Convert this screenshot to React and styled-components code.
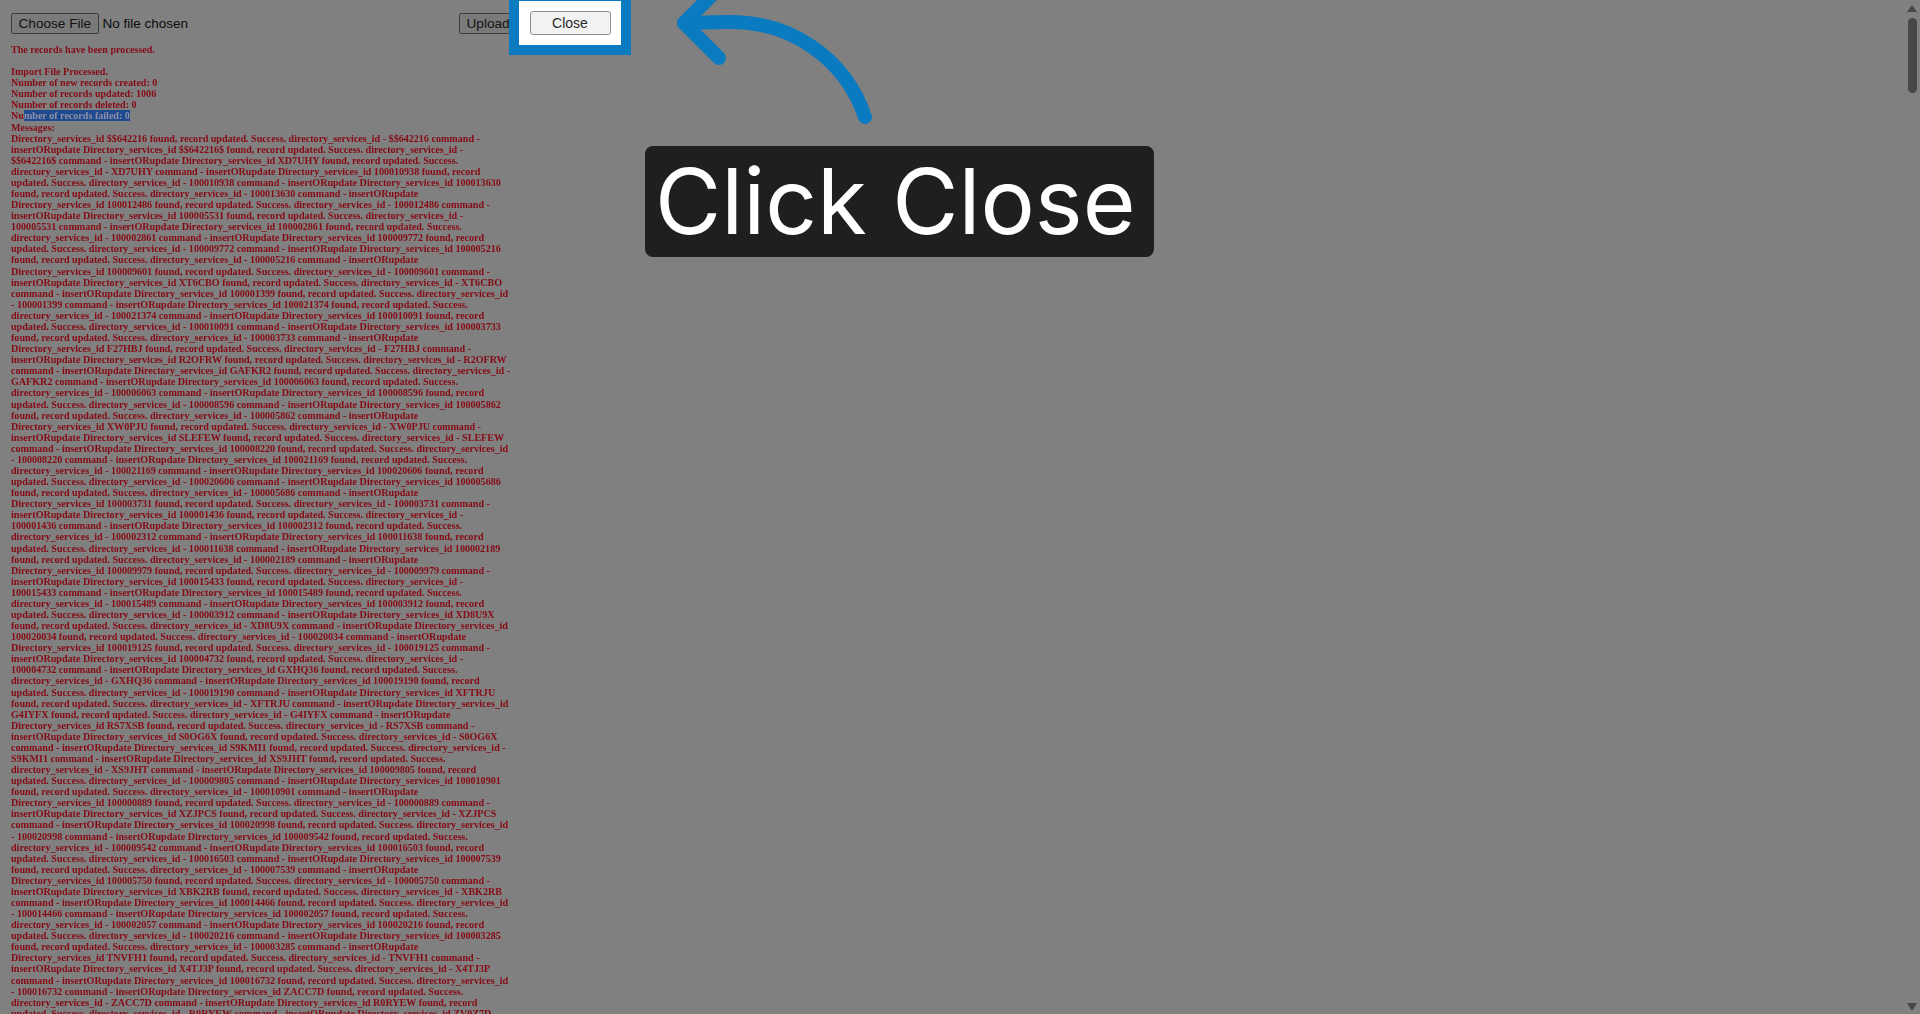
import React from "react";
import styled, { createGlobalStyle } from "styled-components";

const summary = [
  "Import File Processed.",
  "Number of new records created: 0",
  "Number of records updated: 1006",
  "Number of records deleted: 0",
];

const messages = [
  "Directory_services_id $$642216 found, record updated. Success. directory_services_id - $$642216 command -",
  "insertORupdate Directory_services_id $$642216$ found, record updated. Success. directory_services_id -",
  "$$642216$ command - insertORupdate Directory_services_id XD7UHY found, record updated. Success.",
  "directory_services_id - XD7UHY command - insertORupdate Directory_services_id 100010938 found, record",
  "updated. Success. directory_services_id - 100010938 command - insertORupdate Directory_services_id 100013630",
  "found, record updated. Success. directory_services_id - 100013630 command - insertORupdate",
  "Directory_services_id 100012486 found, record updated. Success. directory_services_id - 100012486 command -",
  "insertORupdate Directory_services_id 100005531 found, record updated. Success. directory_services_id -",
  "100005531 command - insertORupdate Directory_services_id 100002861 found, record updated. Success.",
  "directory_services_id - 100002861 command - insertORupdate Directory_services_id 100009772 found, record",
  "updated. Success. directory_services_id - 100009772 command - insertORupdate Directory_services_id 100005216",
  "found, record updated. Success. directory_services_id - 100005216 command - insertORupdate",
  "Directory_services_id 100009601 found, record updated. Success. directory_services_id - 100009601 command -",
  "insertORupdate Directory_services_id XT6CBO found, record updated. Success. directory_services_id - XT6CBO",
  "command - insertORupdate Directory_services_id 100001399 found, record updated. Success. directory_services_id",
  "- 100001399 command - insertORupdate Directory_services_id 100021374 found, record updated. Success.",
  "directory_services_id - 100021374 command - insertORupdate Directory_services_id 100010091 found, record",
  "updated. Success. directory_services_id - 100010091 command - insertORupdate Directory_services_id 100003733",
  "found, record updated. Success. directory_services_id - 100003733 command - insertORupdate",
  "Directory_services_id F27HBJ found, record updated. Success. directory_services_id - F27HBJ command -",
  "insertORupdate Directory_services_id R2OFRW found, record updated. Success. directory_services_id - R2OFRW",
  "command - insertORupdate Directory_services_id GAFKR2 found, record updated. Success. directory_services_id -",
  "GAFKR2 command - insertORupdate Directory_services_id 100006063 found, record updated. Success.",
  "directory_services_id - 100006063 command - insertORupdate Directory_services_id 100008596 found, record",
  "updated. Success. directory_services_id - 100008596 command - insertORupdate Directory_services_id 100005862",
  "found, record updated. Success. directory_services_id - 100005862 command - insertORupdate",
  "Directory_services_id XW0PJU found, record updated. Success. directory_services_id - XW0PJU command -",
  "insertORupdate Directory_services_id SLEFEW found, record updated. Success. directory_services_id - SLEFEW",
  "command - insertORupdate Directory_services_id 100008220 found, record updated. Success. directory_services_id",
  "- 100008220 command - insertORupdate Directory_services_id 100021169 found, record updated. Success.",
  "directory_services_id - 100021169 command - insertORupdate Directory_services_id 100020606 found, record",
  "updated. Success. directory_services_id - 100020606 command - insertORupdate Directory_services_id 100005686",
  "found, record updated. Success. directory_services_id - 100005686 command - insertORupdate",
  "Directory_services_id 100003731 found, record updated. Success. directory_services_id - 100003731 command -",
  "insertORupdate Directory_services_id 100001436 found, record updated. Success. directory_services_id -",
  "100001436 command - insertORupdate Directory_services_id 100002312 found, record updated. Success.",
  "directory_services_id - 100002312 command - insertORupdate Directory_services_id 100011638 found, record",
  "updated. Success. directory_services_id - 100011638 command - insertORupdate Directory_services_id 100002189",
  "found, record updated. Success. directory_services_id - 100002189 command - insertORupdate",
  "Directory_services_id 100009979 found, record updated. Success. directory_services_id - 100009979 command -",
  "insertORupdate Directory_services_id 100015433 found, record updated. Success. directory_services_id -",
  "100015433 command - insertORupdate Directory_services_id 100015489 found, record updated. Success.",
  "directory_services_id - 100015489 command - insertORupdate Directory_services_id 100003912 found, record",
  "updated. Success. directory_services_id - 100003912 command - insertORupdate Directory_services_id XD8U9X",
  "found, record updated. Success. directory_services_id - XD8U9X command - insertORupdate Directory_services_id",
  "100020034 found, record updated. Success. directory_services_id - 100020034 command - insertORupdate",
  "Directory_services_id 100019125 found, record updated. Success. directory_services_id - 100019125 command -",
  "insertORupdate Directory_services_id 100004732 found, record updated. Success. directory_services_id -",
  "100004732 command - insertORupdate Directory_services_id GXHQ36 found, record updated. Success.",
  "directory_services_id - GXHQ36 command - insertORupdate Directory_services_id 100019190 found, record",
  "updated. Success. directory_services_id - 100019190 command - insertORupdate Directory_services_id XFTRJU",
  "found, record updated. Success. directory_services_id - XFTRJU command - insertORupdate Directory_services_id",
  "G4IYFX found, record updated. Success. directory_services_id - G4IYFX command - insertORupdate",
  "Directory_services_id RS7XSB found, record updated. Success. directory_services_id - RS7XSB command -",
  "insertORupdate Directory_services_id S0OG6X found, record updated. Success. directory_services_id - S0OG6X",
  "command - insertORupdate Directory_services_id S9KMI1 found, record updated. Success. directory_services_id -",
  "S9KMI1 command - insertORupdate Directory_services_id XS9JHT found, record updated. Success.",
  "directory_services_id - XS9JHT command - insertORupdate Directory_services_id 100009805 found, record",
  "updated. Success. directory_services_id - 100009805 command - insertORupdate Directory_services_id 100010901",
  "found, record updated. Success. directory_services_id - 100010901 command - insertORupdate",
  "Directory_services_id 100000889 found, record updated. Success. directory_services_id - 100000889 command -",
  "insertORupdate Directory_services_id XZJPCS found, record updated. Success. directory_services_id - XZJPCS",
  "command - insertORupdate Directory_services_id 100020998 found, record updated. Success. directory_services_id",
  "- 100020998 command - insertORupdate Directory_services_id 100009542 found, record updated. Success.",
  "directory_services_id - 100009542 command - insertORupdate Directory_services_id 100016503 found, record",
  "updated. Success. directory_services_id - 100016503 command - insertORupdate Directory_services_id 100007539",
  "found, record updated. Success. directory_services_id - 100007539 command - insertORupdate",
  "Directory_services_id 100005750 found, record updated. Success. directory_services_id - 100005750 command -",
  "insertORupdate Directory_services_id XBK2RB found, record updated. Success. directory_services_id - XBK2RB",
  "command - insertORupdate Directory_services_id 100014466 found, record updated. Success. directory_services_id",
  "- 100014466 command - insertORupdate Directory_services_id 100002057 found, record updated. Success.",
  "directory_services_id - 100002057 command - insertORupdate Directory_services_id 100020216 found, record",
  "updated. Success. directory_services_id - 100020216 command - insertORupdate Directory_services_id 100003285",
  "found, record updated. Success. directory_services_id - 100003285 command - insertORupdate",
  "Directory_services_id TNVFH1 found, record updated. Success. directory_services_id - TNVFH1 command -",
  "insertORupdate Directory_services_id X4TJ3P found, record updated. Success. directory_services_id - X4TJ3P",
  "command - insertORupdate Directory_services_id 100016732 found, record updated. Success. directory_services_id",
  "- 100016732 command - insertORupdate Directory_services_id ZACC7D found, record updated. Success.",
  "directory_services_id - ZACC7D command - insertORupdate Directory_services_id R0RYEW found, record",
  "updated. Success. directory_services_id - R0RYEW command - insertORupdate Directory_services_id ZV0Z7D",
];

const App = () => {
  return (
    <>
      <GlobalStyle />
      <Page>
        <Main>
          <FileRow>
            <FileField>
              <FileButton>Choose File</FileButton>
              <FileName>No file chosen</FileName>
            </FileField>
            <FileButton>Upload</FileButton>
          </FileRow>
          <Log>
            <Line>The records have been processed.</Line>
            <Spacer />
            {summary.map((line) => (
              <Line key={line}>{line}</Line>
            ))}
            <Line>
              Nu<Selected>mber of records failed: 0</Selected>
            </Line>
            <Line>Messages:</Line>
            {messages.map((line, i) => (
              <Line key={i}>{line}</Line>
            ))}
          </Log>
        </Main>
        <Scrollbar>
          <ArrowUp />
          <Thumb />
          <ArrowDown />
        </Scrollbar>
        <Highlight>
          <CloseButton>Close</CloseButton>
        </Highlight>
        <PointerArrow viewBox="0 0 240 130" aria-hidden="true">
          <path d="M225 117 C205 58 150 20 85 22 L44 23" />
          <path d="M79 58 L44 23 L84 -17" />
        </PointerArrow>
        <Callout>Click Close</Callout>
      </Page>
    </>
  );
};

export default App;

const GlobalStyle = createGlobalStyle`
  html, body {
    margin: 0;
    padding: 0;
    background: #808080;
  }
`;

const Page = styled.div`
  position: relative;
  display: flex;
  width: 1920px;
  height: 1014px;
  overflow: hidden;
  background-color: #808080;
`;

const Main = styled.div`
  flex: 1;
  min-width: 0;
  padding: 13px 0 0 11px;
`;

const FileRow = styled.div`
  display: flex;
  align-items: center;
`;

const FileField = styled.div`
  display: flex;
  align-items: center;
  width: 448px;
`;

const FileButton = styled.div`
  box-sizing: border-box;
  height: 21px;
  padding: 0 6.5px;
  line-height: 19px;
  font-family: "Liberation Sans", Arial, sans-serif;
  font-size: 13.6px;
  color: #111111;
  white-space: nowrap;
  background-color: #7a7a7a;
  border: 1px solid #3c3c3c;
  border-radius: 2px;
`;

const FileName = styled.span`
  margin-left: 4px;
  font-family: "Liberation Sans", Arial, sans-serif;
  font-size: 13.5px;
  color: #0c0c0c;
`;

const Log = styled.div`
  margin-top: 10px;
  font-family: "Liberation Serif", "Times New Roman", serif;
  font-size: 10.09px;
  font-weight: bold;
  line-height: 11.09px;
  color: #860a14;
  filter: blur(0.4px);
`;

const Line = styled.div`
  height: 11.09px;
  white-space: nowrap;
`;

const Spacer = styled.div`
  height: 11.09px;
`;

const Selected = styled.span`
  color: #8e90a6;
  background-color: #1f4a8f;
`;

const Scrollbar = styled.div`
  display: flex;
  flex-direction: column;
  align-items: center;
  flex-shrink: 0;
  width: 16px;
  height: 100%;
`;

const ArrowUp = styled.div`
  width: 0;
  height: 0;
  margin-top: 5px;
  border-left: 5px solid transparent;
  border-right: 5px solid transparent;
  border-bottom: 7px solid #474747;
`;

const Thumb = styled.div`
  width: 9px;
  height: 75px;
  margin-top: 6px;
  background-color: #474747;
  border-radius: 5px;
`;

const ArrowDown = styled.div`
  width: 0;
  height: 0;
  margin-top: auto;
  margin-bottom: 3px;
  border-left: 5px solid transparent;
  border-right: 5px solid transparent;
  border-top: 8px solid #474747;
`;

const Highlight = styled.div`
  position: absolute;
  top: 0;
  left: 509px;
  box-sizing: border-box;
  display: flex;
  align-items: center;
  justify-content: center;
  width: 122px;
  height: 55px;
  background-color: #fff;
  border: 10px solid #0a7ac1;
  border-top-width: 1px;
`;

const CloseButton = styled.div`
  box-sizing: border-box;
  width: 81px;
  height: 24px;
  line-height: 22px;
  text-align: center;
  font-family: "Liberation Sans", Arial, sans-serif;
  font-size: 14px;
  color: #2a2a2a;
  background-color: #f2f2f2;
  border: 1px solid #8f8f8f;
  border-radius: 3px;
`;

const PointerArrow = styled.svg`
  position: absolute;
  top: 0;
  left: 640px;
  width: 240px;
  height: 130px;
  overflow: visible;
  fill: none;
  stroke: #0a7ac1;
  stroke-width: 14px;
  stroke-linecap: round;
  stroke-linejoin: round;
`;

const Callout = styled.div`
  position: absolute;
  top: 146px;
  left: 645px;
  box-sizing: border-box;
  width: 509px;
  height: 111px;
  padding-left: 10px;
  line-height: 111px;
  font-family: Inter, "Noto Sans", sans-serif;
  font-size: 90.7px;
  color: #fff;
  white-space: nowrap;
  background-color: #1f1f1f;
  border-radius: 8px;
`;
